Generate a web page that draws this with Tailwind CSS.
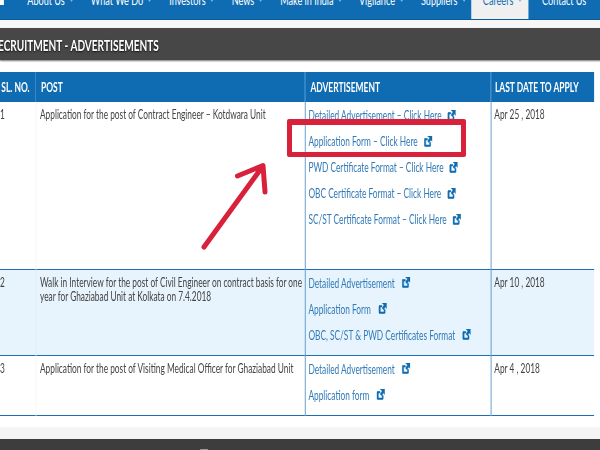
<!DOCTYPE html>
<html>
<head>
<meta charset="utf-8">
<script src="https://cdn.jsdelivr.net/npm/@tailwindcss/browser@4"></script>
</head>
<body class="w-[600px] h-[450px] overflow-hidden relative bg-white font-['Lato','Noto_Sans',sans-serif] text-[#444]">
<div class="w-[924px] h-[450px] origin-top-left scale-x-[0.65] flex flex-col">
  <nav class="h-[20px] shrink-0 bg-[#0f6cb2] border-b border-[#0b5c9c] flex items-start text-white text-[14px] leading-[20px] whitespace-nowrap overflow-hidden">
    <i class="w-[6px] h-[5px] bg-white mr-[36px]"></i>
    <span class="mt-[-10px] flex items-center gap-[7px] mr-[27px]">About Us<i class="w-0 h-0 border-x-[3px] border-x-transparent border-t-[3px] border-t-[#7fb4dc]"></i></span>
    <span class="mt-[-10px] flex items-center gap-[7px] mr-[27px]">What We Do<i class="w-0 h-0 border-x-[3px] border-x-transparent border-t-[3px] border-t-[#7fb4dc]"></i></span>
    <span class="mt-[-10px] flex items-center gap-[7px] mr-[27px]">Investors<i class="w-0 h-0 border-x-[3px] border-x-transparent border-t-[3px] border-t-[#7fb4dc]"></i></span>
    <span class="mt-[-10px] flex items-center gap-[7px] mr-[27px]">News<i class="w-0 h-0 border-x-[3px] border-x-transparent border-t-[3px] border-t-[#7fb4dc]"></i></span>
    <span class="mt-[-10px] flex items-center gap-[7px] mr-[26px]">Make in India<i class="w-0 h-0 border-x-[3px] border-x-transparent border-t-[3px] border-t-[#7fb4dc]"></i></span>
    <span class="mt-[-10px] flex items-center gap-[7px] mr-[27px]">Vigilance<i class="w-0 h-0 border-x-[3px] border-x-transparent border-t-[3px] border-t-[#7fb4dc]"></i></span>
    <span class="mt-[-10px] flex items-center gap-[7px] mr-[8px]">Suppliers<i class="w-0 h-0 border-x-[3px] border-x-transparent border-t-[3px] border-t-[#7fb4dc]"></i></span>
    <span class="h-[19px] w-[88px] bg-[#f0f0f0] text-[#0f6cb2] pl-[18px] mr-[21px]"><span class="flex items-center gap-[7px] mt-[-10px]">Careers<i class="w-0 h-0 border-x-[3px] border-x-transparent border-t-[3px] border-t-[#7fb4dc]"></i></span></span>
    <span class="mt-[-10px]">Contact Us</span>
  </nav>
  <div class="h-[8px] shrink-0 bg-[#f6f6f6]"></div>
  <h1 class="h-[32px] shrink-0 bg-[#474747] shadow-[0_1px_2px_#777] text-white text-[15.5px] leading-[34px] font-bold whitespace-nowrap overflow-hidden [text-shadow:0_1px_2px_#111]"><span class="block ml-[-13px]">RECRUITMENT - ADVERTISEMENTS</span></h1>
  <div class="h-[12px] shrink-0"></div>
  <table class="w-[914px] shrink-0 border-collapse table-fixed text-[12.8px] leading-[14px] border-b border-[#1a6fb5]">
    <colgroup><col class="w-[55px]"><col class="w-[414px]"><col class="w-[286px]"><col class="w-[159px]"></colgroup>
    <thead>
      <tr class="h-[30px] bg-[#0f6cb2] text-white text-[13px] text-left">
        <th class="font-bold pl-[2px] whitespace-nowrap">SL. NO.</th>
        <th class="font-bold pl-[8px] border-r border-[#5a9fd4]">POST</th>
        <th class="font-bold pl-[8px] border-r border-[#5a9fd4]">ADVERTISEMENT</th>
        <th class="font-bold pl-[6px] whitespace-nowrap">LAST DATE TO APPLY</th>
      </tr>
    </thead>
    <tbody>
      <tr class="h-[167px] align-top border-b border-[#1a6fb5]">
        <td class="pt-[5px] border-r border-[#eef1f4]">1</td>
        <td class="pt-[5px] pl-[6px] border-r border-[#1a6fb5]">Application for the post of Contract Engineer – Kotdwara Unit</td>
        <td class="pl-[5px] border-r border-[#1a6fb5] text-[#337ab7]">
          <a class="flex items-center gap-[9px] h-[26px] whitespace-nowrap">Detailed Advertisement – Click Here<svg class="w-[13px] h-[11px]" viewBox="0 0 13 11"><path d="M1.500 2.500h4v1.500h-2.500v5h6v-2.500h1.500v3a1 1 0 0 1-1 1h-7.500a1 1 0 0 1-1-1v-6a1 1 0 0 1 1-1z M6 0h7v5.500l-2-1.800l-3 3l-2-1.700l3-3z" fill="#0f6cb2" stroke="#0f6cb2" stroke-width="0.700"/></svg></a>
          <a class="flex items-center gap-[9px] h-[26px] whitespace-nowrap">Application Form – Click Here<svg class="w-[13px] h-[11px]" viewBox="0 0 13 11"><path d="M1.500 2.500h4v1.500h-2.500v5h6v-2.500h1.500v3a1 1 0 0 1-1 1h-7.500a1 1 0 0 1-1-1v-6a1 1 0 0 1 1-1z M6 0h7v5.500l-2-1.800l-3 3l-2-1.700l3-3z" fill="#0f6cb2" stroke="#0f6cb2" stroke-width="0.700"/></svg></a>
          <a class="flex items-center gap-[9px] h-[26px] whitespace-nowrap">PWD Certificate Format – Click Here<svg class="w-[13px] h-[11px]" viewBox="0 0 13 11"><path d="M1.500 2.500h4v1.500h-2.500v5h6v-2.500h1.500v3a1 1 0 0 1-1 1h-7.500a1 1 0 0 1-1-1v-6a1 1 0 0 1 1-1z M6 0h7v5.500l-2-1.800l-3 3l-2-1.700l3-3z" fill="#0f6cb2" stroke="#0f6cb2" stroke-width="0.700"/></svg></a>
          <a class="flex items-center gap-[9px] h-[26px] whitespace-nowrap">OBC Certificate Format – Click Here<svg class="w-[13px] h-[11px]" viewBox="0 0 13 11"><path d="M1.500 2.500h4v1.500h-2.500v5h6v-2.500h1.500v3a1 1 0 0 1-1 1h-7.500a1 1 0 0 1-1-1v-6a1 1 0 0 1 1-1z M6 0h7v5.500l-2-1.800l-3 3l-2-1.700l3-3z" fill="#0f6cb2" stroke="#0f6cb2" stroke-width="0.700"/></svg></a>
          <a class="flex items-center gap-[9px] h-[26px] whitespace-nowrap">SC/ST Certificate Format – Click Here<svg class="w-[13px] h-[11px]" viewBox="0 0 13 11"><path d="M1.500 2.500h4v1.500h-2.500v5h6v-2.500h1.500v3a1 1 0 0 1-1 1h-7.500a1 1 0 0 1-1-1v-6a1 1 0 0 1 1-1z M6 0h7v5.500l-2-1.800l-3 3l-2-1.700l3-3z" fill="#0f6cb2" stroke="#0f6cb2" stroke-width="0.700"/></svg></a>
        </td>
        <td class="pt-[5px] pl-[5px]">Apr 25 , 2018</td>
      </tr>
      <tr class="h-[86px] align-top bg-[#e8f4fd] border-b border-[#1a6fb5]">
        <td class="pt-[5px] border-r border-[#dde8f0]">2</td>
        <td class="pt-[5px] pl-[6px] border-r border-[#1a6fb5]">Walk in Interview for the post of Civil Engineer on contract basis for one year for Ghaziabad Unit at Kolkata on 7.4.2018</td>
        <td class="pl-[5px] border-r border-[#1a6fb5] text-[#337ab7]">
          <a class="flex items-center gap-[11px] h-[26px] whitespace-nowrap">Detailed Advertisement<svg class="w-[13px] h-[11px]" viewBox="0 0 13 11"><path d="M1.500 2.500h4v1.500h-2.500v5h6v-2.500h1.500v3a1 1 0 0 1-1 1h-7.500a1 1 0 0 1-1-1v-6a1 1 0 0 1 1-1z M6 0h7v5.500l-2-1.800l-3 3l-2-1.700l3-3z" fill="#0f6cb2" stroke="#0f6cb2" stroke-width="0.700"/></svg></a>
          <a class="flex items-center gap-[11px] h-[26px] whitespace-nowrap">Application Form<svg class="w-[13px] h-[11px]" viewBox="0 0 13 11"><path d="M1.500 2.500h4v1.500h-2.500v5h6v-2.500h1.500v3a1 1 0 0 1-1 1h-7.500a1 1 0 0 1-1-1v-6a1 1 0 0 1 1-1z M6 0h7v5.500l-2-1.800l-3 3l-2-1.700l3-3z" fill="#0f6cb2" stroke="#0f6cb2" stroke-width="0.700"/></svg></a>
          <a class="flex items-center gap-[11px] h-[26px] whitespace-nowrap">OBC, SC/ST &amp; PWD Certificates Format<svg class="w-[13px] h-[11px]" viewBox="0 0 13 11"><path d="M1.500 2.500h4v1.500h-2.500v5h6v-2.500h1.500v3a1 1 0 0 1-1 1h-7.500a1 1 0 0 1-1-1v-6a1 1 0 0 1 1-1z M6 0h7v5.500l-2-1.800l-3 3l-2-1.700l3-3z" fill="#0f6cb2" stroke="#0f6cb2" stroke-width="0.700"/></svg></a>
        </td>
        <td class="pt-[5px] pl-[5px]">Apr 10 , 2018</td>
      </tr>
      <tr class="h-[60px] align-top">
        <td class="pt-[5px] border-r border-[#eef1f4]">3</td>
        <td class="pt-[5px] pl-[6px] border-r border-[#1a6fb5]">Application for the post of Visiting Medical Officer for Ghaziabad Unit</td>
        <td class="pl-[5px] border-r border-[#1a6fb5] text-[#337ab7]">
          <a class="flex items-center gap-[11px] h-[26px] whitespace-nowrap">Detailed Advertisement<svg class="w-[13px] h-[11px]" viewBox="0 0 13 11"><path d="M1.500 2.500h4v1.500h-2.500v5h6v-2.500h1.500v3a1 1 0 0 1-1 1h-7.500a1 1 0 0 1-1-1v-6a1 1 0 0 1 1-1z M6 0h7v5.500l-2-1.800l-3 3l-2-1.700l3-3z" fill="#0f6cb2" stroke="#0f6cb2" stroke-width="0.700"/></svg></a>
          <a class="flex items-center gap-[11px] h-[26px] whitespace-nowrap">Application form<svg class="w-[13px] h-[11px]" viewBox="0 0 13 11"><path d="M1.500 2.500h4v1.500h-2.500v5h6v-2.500h1.500v3a1 1 0 0 1-1 1h-7.500a1 1 0 0 1-1-1v-6a1 1 0 0 1 1-1z M6 0h7v5.500l-2-1.800l-3 3l-2-1.700l3-3z" fill="#0f6cb2" stroke="#0f6cb2" stroke-width="0.700"/></svg></a>
        </td>
        <td class="pt-[5px] pl-[5px]">Apr 4 , 2018</td>
      </tr>
    </tbody>
  </table>
  <div class="h-[11px] shrink-0"></div>
  <div class="h-[12px] shrink-0 bg-[#f5f5f5]"></div>
  <div class="flex-1 bg-[#3d3d3d] pl-[308px] pt-[10px]"><div class="w-[12px] h-[2px] bg-[#999]"></div></div>
</div>
<div class="absolute left-[287px] top-[119px] w-[179px] h-[38px] border-x-[5px] border-t-[6px] border-b-[5px] border-[#d8213a] rounded-[2px]"></div>
<svg class="absolute left-0 top-0 w-[600px] h-[450px] pointer-events-none" viewBox="0 0 600 450" fill="none" stroke="#d8213a" stroke-width="5" stroke-linecap="round" stroke-linejoin="round"><path d="M204 247L263 166M237.500 176L263 165.500L265 192"/></svg>
</body>
</html>
